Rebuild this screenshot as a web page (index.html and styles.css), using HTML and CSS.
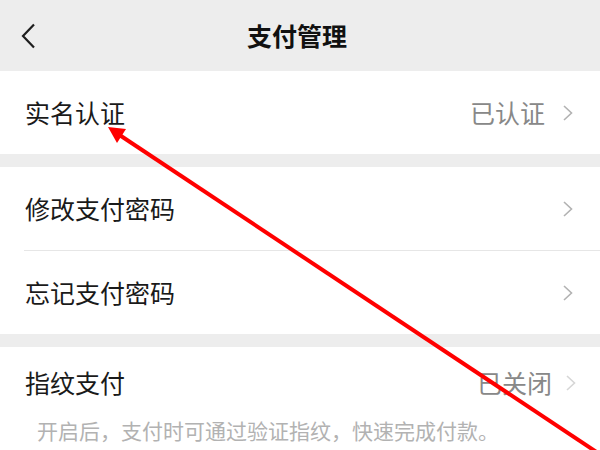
FILE: index.html
```html
<!DOCTYPE html>
<html lang="zh-CN">
<head>
<meta charset="utf-8">
<link rel="stylesheet" href="styles.css">
</head>
<body>
<div class="page">
  <header class="topbar">
    <div class="back">
      <svg width="15" height="26" viewBox="0 0 15 26"><path d="M13 1.5 L2 13 L13 24.5" fill="none" stroke="#1e1e1e" stroke-width="2.2" stroke-linejoin="miter"/></svg>
    </div>
    <div class="title">支付管理</div>
    <div class="spacer"></div>
  </header>

  <section class="group">
    <div class="row">
      <span class="label">实名认证</span>
      <span class="right"><span class="value">已认证</span><svg class="chev" width="10" height="16" viewBox="0 0 10 16"><path d="M1 1 L8.5 8 L1 15" fill="none" stroke="#b2b2b2" stroke-width="1.6"/></svg></span>
    </div>
  </section>

  <section class="group">
    <div class="row">
      <span class="label">修改支付密码</span>
      <span class="right"><svg class="chev" width="10" height="16" viewBox="0 0 10 16"><path d="M1 1 L8.5 8 L1 15" fill="none" stroke="#b2b2b2" stroke-width="1.6"/></svg></span>
    </div>
    <div class="divider"></div>
    <div class="row">
      <span class="label">忘记支付密码</span>
      <span class="right"><svg class="chev" width="10" height="16" viewBox="0 0 10 16"><path d="M1 1 L8.5 8 L1 15" fill="none" stroke="#b2b2b2" stroke-width="1.6"/></svg></span>
    </div>
  </section>

  <section class="group last">
    <div class="row tall">
      <span class="label">指纹支付</span>
      <span class="right off"><span class="value">已关闭</span><svg class="chev" width="10" height="16" viewBox="0 0 10 16"><path d="M1 1 L8.5 8 L1 15" fill="none" stroke="#d6d6d6" stroke-width="1.6"/></svg></span>
    </div>
    <div class="hint">开启后，支付时可通过验证指纹，快速完成付款。</div>
  </section>

  <svg class="arrow" width="600" height="450" viewBox="0 0 600 450">
    <line x1="598" y1="453" x2="118" y2="134" stroke="#ff0000" stroke-width="4"/>
    <polygon points="108,127 126,129 117,143" fill="#ff0000"/>
  </svg>
</div>
</body>
</html>
```

FILE: styles.css
```css
* { box-sizing: border-box; }
html, body {
  margin: 0;
  padding: 0;
  background: #ededed;
}
body {
  font-family: "Noto Sans CJK SC", "Noto Sans", sans-serif;
  color: #1a1a1a;
  width: 600px;
  height: 450px;
  overflow: hidden;
}
.page {
  position: relative;
  width: 600px;
  height: 450px;
  overflow: hidden;
}
.topbar {
  height: 71px;
  display: grid;
  grid-template-columns: 80px 1fr 80px;
  align-items: center;
  background: #ededed;
}
.back {
  padding-left: 21px;
  display: flex;
  align-items: center;
}
.back svg { display: block; }
.title {
  text-align: center;
  font-size: 25px;
  font-weight: 700;
  line-height: 1;
  color: #111;
  margin-left: -6px;
}
.group {
  background: #fff;
  margin-bottom: 13px;
}
.group.last {
  margin-top: 1px;
  height: 110px;
}
.row {
  height: 83px;
  padding: 0 27px 0 25px;
  display: flex;
  align-items: center;
  justify-content: space-between;
}
.row.tall {
  height: auto;
  padding-top: 23px;
  line-height: 35px;
}
.label {
  font-size: 25px;
  line-height: 1;
  color: #1a1a1a;
}
.right {
  display: flex;
  align-items: center;
  gap: 18px;
}
.right.off {
  gap: 14px;
  margin-right: -3px;
}
.value {
  font-size: 25px;
  line-height: 1;
  color: #888;
}
.chev { display: block; }
.divider {
  height: 1px;
  background: #e6e6e6;
  margin-left: 24px;
}
.hint {
  padding-left: 37px;
  margin-top: 20px;
  font-size: 21px;
  line-height: 30px;
  color: #b2b2b2;
}
.arrow {
  position: absolute;
  left: 0;
  top: 0;
  pointer-events: none;
}
```
